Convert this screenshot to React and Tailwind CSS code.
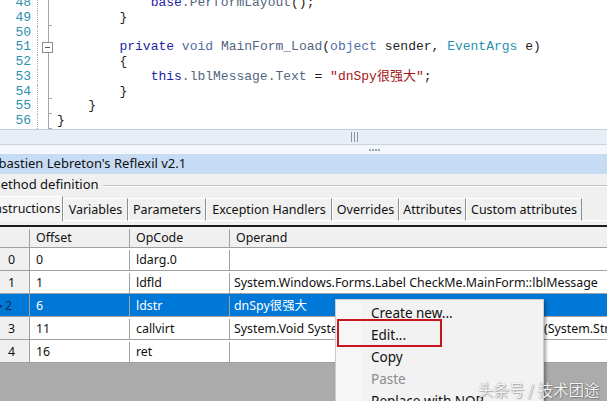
import React from "react";

const kw = "text-[#1f1fa3]";
const kw2 = "text-[#4f6ea6]";
const meth = "text-[#52657f]";
const typ = "text-[#2b91af]";
const str = "text-[#a31515]";

const lines = [
  { n: 48, tick: false, code: <><span className="whitespace-pre">{"            "}</span><span className={kw}>base</span><span className={meth}>.PerformLayout</span>();</> },
  { n: 49, tick: true, code: <><span className="whitespace-pre">{"        "}</span>{"}"}</> },
  { n: 50, tick: false, code: null },
  { n: 51, tick: false, fold: true, code: <><span className="whitespace-pre">{"        "}</span><span className={kw}>private</span> <span className={kw2}>void</span> <span className={meth}>MainForm_Load</span>(<span className={kw2}>object</span> sender, <span className={typ}>EventArgs</span> e)</> },
  { n: 52, tick: false, code: <><span className="whitespace-pre">{"        "}</span>{"{"}</> },
  { n: 53, tick: false, code: <><span className="whitespace-pre">{"            "}</span><span className={kw}>this</span><span className={meth}>.lblMessage.Text</span> = <span className={str}>"dnSpy很强大"</span>;</> },
  { n: 54, tick: true, code: <><span className="whitespace-pre">{"        "}</span>{"}"}</> },
  { n: 55, tick: true, code: <><span className="whitespace-pre">{"    "}</span>{"}"}</> },
  { n: 56, tick: true, code: <>{"}"}</> },
];

const tabs = [
  { label: "Variables", w: "w-[65px]" },
  { label: "Parameters", w: "w-[78px]" },
  { label: "Exception Handlers", w: "w-[126px]" },
  { label: "Overrides", w: "w-[67px]" },
  { label: "Attributes", w: "w-[67px]" },
  { label: "Custom attributes", w: "w-[116px]" },
];

const rows = [
  { i: "0", off: "0", op: "ldarg.0", arg: "" },
  { i: "1", off: "1", op: "ldfld", arg: "System.Windows.Forms.Label CheckMe.MainForm::lblMessage" },
  { i: "2", off: "6", op: "ldstr", arg: "dnSpy很强大", sel: true },
  { i: "3", off: "11", op: "callvirt", arg: "System.Void System.Windows.Forms.Control::set_Text(System.String)" },
  { i: "4", off: "16", op: "ret", arg: "" },
];

const menuItems = [
  { label: "Create new..." },
  { label: "Edit..." },
  { label: "Copy" },
  { label: "Paste", disabled: true },
  { label: "Replace with NOP" },
];

function CodeEditor() {
  return (
    <div className="h-[129px] bg-white overflow-hidden font-['Liberation_Mono','Noto_Sans_CJK_SC',monospace] text-[13px] text-[#1e1e1e]">
      <div className="mt-[-4px]">
        {lines.map((l) => (
          <div key={l.n} className="flex h-[14.75px] leading-[14.75px]">
            <div className="w-[31px] text-right text-[#2b91af]">{l.n}</div>
            <div className="w-[7px] border-r border-dotted border-[#a8a8a8]" />
            <div className="w-[19px] relative">
              <div className={`ml-[10px] w-[4px] h-full border-l border-[#a5a5a5] ${l.tick ? "border-b" : ""}`} />
              {l.fold && (
                <div className="absolute left-[4px] top-[2px] w-[11px] h-[11px] bg-white border border-[#8c8c8c] flex items-center justify-center">
                  <div className="w-[5px] h-px bg-[#555]" />
                </div>
              )}
            </div>
            <div className="whitespace-pre">{l.code}</div>
          </div>
        ))}
      </div>
    </div>
  );
}

export default function App() {
  return (
    <div className="w-[607px] h-[401px] overflow-hidden relative bg-[#f0f0f0] font-['Noto_Sans','Noto_Sans_CJK_SC',sans-serif] text-[#111]">
      <div className="flex flex-col h-full">
        <CodeEditor />
        <div className="h-[15px] border-t border-[#c2cbd7] bg-[#e8eef6] flex justify-center">
          <div className="ml-[101px] mt-[2px] flex gap-[2px] h-[10px]">
            <div className="w-px bg-[#8a94a2]" />
            <div className="w-px bg-[#8a94a2]" />
            <div className="w-px bg-[#8a94a2]" />
          </div>
        </div>
        <div className="h-[10px] border-t border-[#c9d2de] bg-[#f4f7fb] flex justify-center">
          <div className="ml-[142px] mt-[4px] flex gap-[1px] h-[2px]">
            <div className="w-[2px] bg-[#9aa4b2]" />
            <div className="w-[2px] bg-[#9aa4b2]" />
            <div className="w-[2px] bg-[#9aa4b2]" />
            <div className="w-[2px] bg-[#9aa4b2]" />
          </div>
        </div>
        <div className="h-[20px] bg-[#c6dcf5] flex items-center text-[13px] whitespace-nowrap">
          <span className="ml-[-16px]">Sebastien Lebreton's Reflexil v2.1</span>
        </div>
        <div className="h-[22px] flex items-center text-[13px] whitespace-nowrap">
          <span className="ml-[-11px]">Method definition</span>
          <div className="flex-1 ml-[4px] mt-px border-t border-[#c4c4c4] border-b border-b-white" />
        </div>
        <div className="h-[25px] flex items-end text-[12.5px] whitespace-nowrap">
          <div className="w-[77px] ml-[-14px] h-[25px] bg-[#f6f6f6] border-t border-l border-white border-r border-r-[#8d8d8d] flex items-center pl-[3px]">
            Instructions
          </div>
          {tabs.map((t) => (
            <div key={t.label} className={`${t.w} h-[23px] pt-[2px] border-t border-l border-white border-r border-r-[#8d8d8d] border-b border-b-white flex items-center justify-center`}>
              {t.label}
            </div>
          ))}
          <div className="flex-1 h-[23px] border-b border-white" />
        </div>
        <div className="h-[4px]" />
        <div className="h-[2px] bg-[#1c1c1c]" />
        <div className="text-[12.4px] whitespace-nowrap">
          <div className="flex h-[21px] pt-[2px] bg-[#f0f0f0] border-b border-[#a0a0a0]">
            <div className="w-[30px] border-r border-[#a0a0a0]" />
            <div className="w-[100px] border-r border-[#a0a0a0] pl-[6px] flex items-center">Offset</div>
            <div className="w-[100px] border-r border-[#a0a0a0] pl-[6px] flex items-center">OpCode</div>
            <div className="flex-1 pl-[6px] flex items-center">Operand</div>
          </div>
          {rows.map((r) => (
            <div key={r.i} className={`flex h-[23px] pt-[2px] border-b border-[#a0a0a0] ${r.sel ? "bg-[#0078d7] text-white" : "bg-white"}`}>
              <div className={`w-[30px] mt-[-2px] border-r border-[#a0a0a0] flex items-center pt-[2px] ${r.sel ? "bg-[#0078d7] text-[#0d2850]" : "bg-[#f0f0f0]"}`}>
                {r.sel ? (
                  <span className="w-[7px] text-[6px] leading-none ml-[-3px] text-[#0d2850]">▶</span>
                ) : (
                  <span className="w-[7px]" />
                )}
                <span className="ml-[1px]">{r.i}</span>
              </div>
              <div className="w-[100px] border-r border-[#a0a0a0] pl-[6px] flex items-center">{r.off}</div>
              <div className="w-[100px] border-r border-[#a0a0a0] pl-[6px] flex items-center">{r.op}</div>
              <div className="flex-1 pl-[4px] flex items-center overflow-hidden">{r.arg}</div>
            </div>
          ))}
        </div>
        <div className="flex-1 bg-[#ababab]" />
      </div>

      <div className="absolute left-[335px] top-[299px] w-[209px] h-[120px] bg-[#f2f2f2] border border-[#cccccc] shadow-[2px_2px_3px_rgba(0,0,0,0.35)] text-[13.5px] flex">
        <div className="w-[25px] bg-[#f6f6f6]" />
        <div className="flex-1 pt-[2px]">
          {menuItems.map((m) => (
            <div key={m.label} className={`h-[22px] flex items-center pl-[10px] whitespace-nowrap ${m.disabled ? "text-[#8c8c8c]" : "text-[#111]"}`}>
              {m.label}
            </div>
          ))}
        </div>
      </div>
      <div className="absolute left-[337px] top-[319px] w-[105px] h-[28px] border-2 border-[#c8161e]" />

      <div className="absolute left-[478px] top-[378px] text-[15.5px] text-[#f4f4f4] whitespace-nowrap font-['Noto_Sans_CJK_SC',sans-serif] [text-shadow:0_0_1px_rgba(0,0,0,0.45),1px_1px_1px_rgba(0,0,0,0.25)]">
        头条号 / 技术团途
      </div>
    </div>
  );
}
